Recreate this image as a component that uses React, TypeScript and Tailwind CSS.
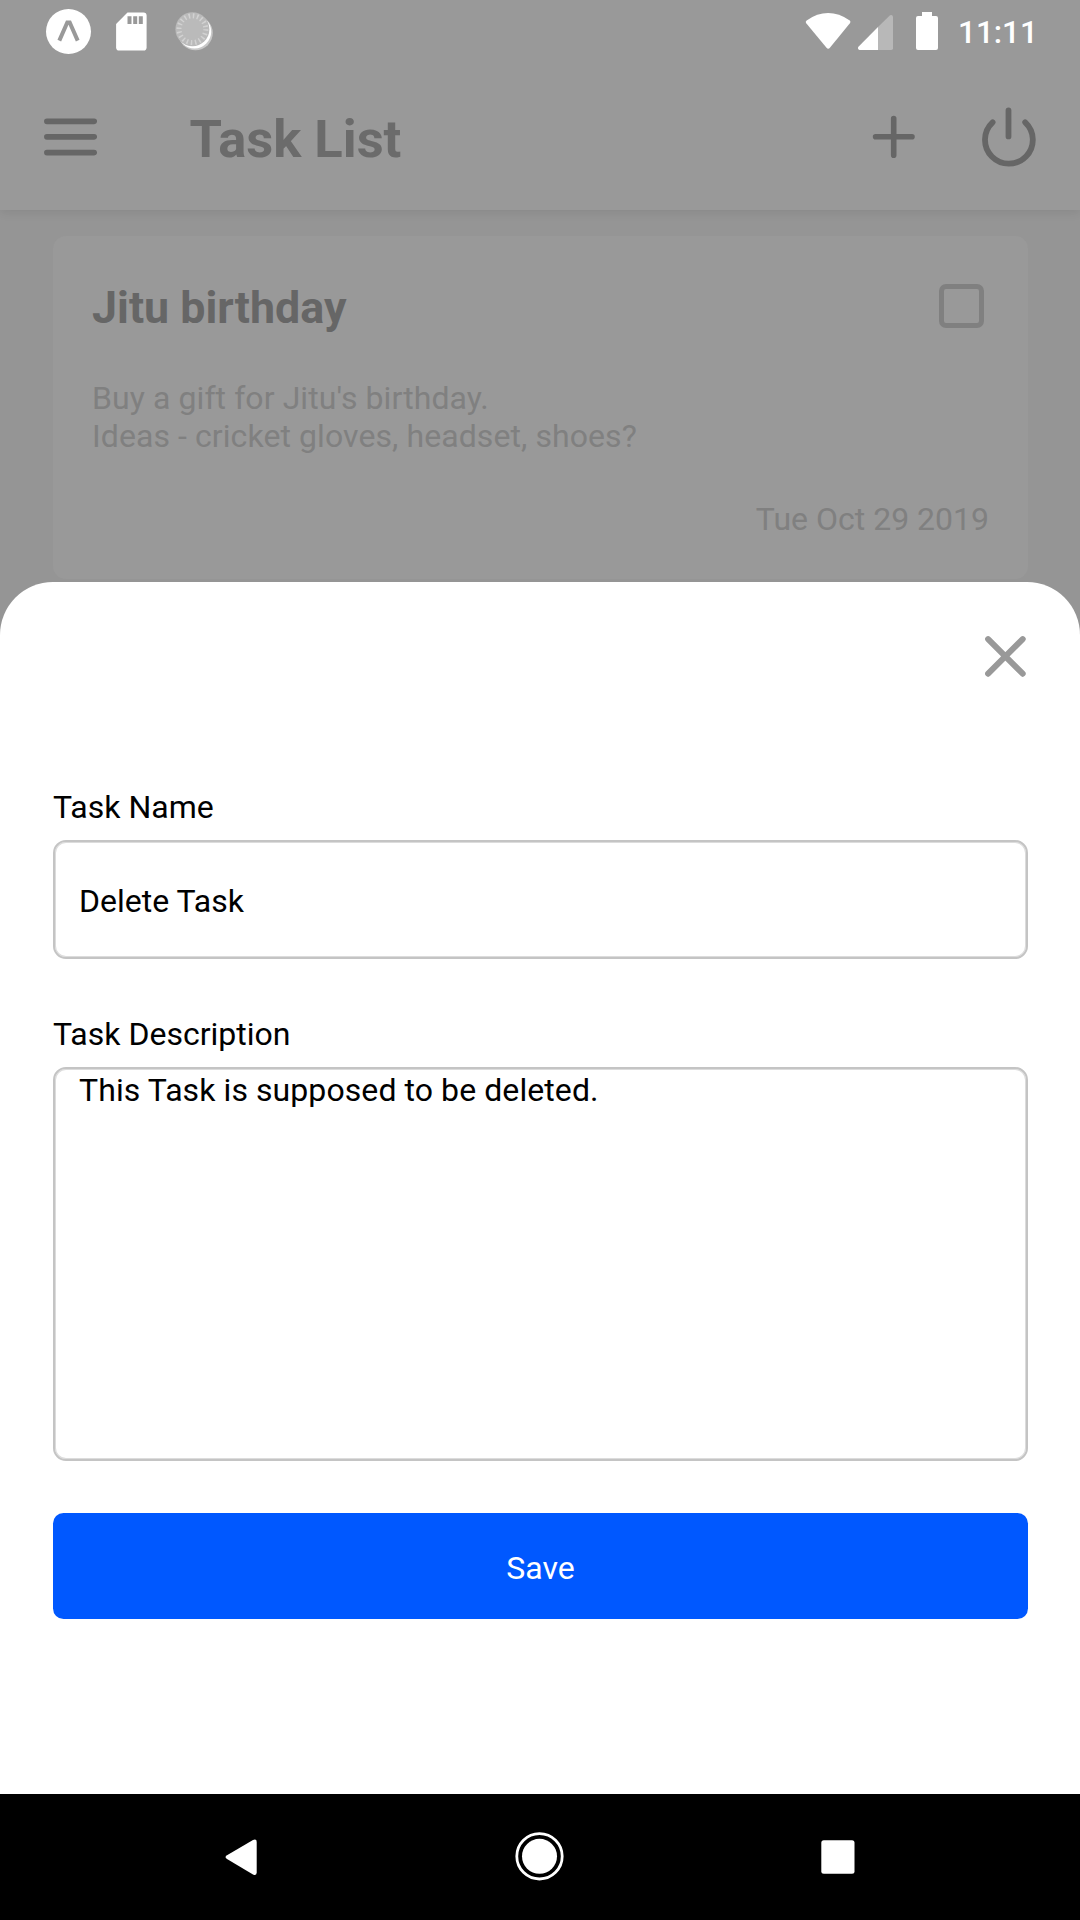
import React from "react";

function StatusBar() {
  return (
    <div className="flex h-[63px] w-full items-start">
      <svg className="block h-[63px] w-[240px]" viewBox="0 0 240 63">
        <circle cx="68.5" cy="31.5" r="22.5" fill="#fff" />
        <path d="M59.3 40.6 67.3 22.4H69.7L77.7 40.6" fill="none" stroke="#999" strokeWidth="4" />
        <path d="M127.5 12.5H143.5Q146.6 12.5 146.6 15.6V47.4Q146.6 50.5 143.5 50.5H119.2Q116.1 50.5 116.1 47.4V23.9Z" fill="#fff" />
        <path d="M127.5 16.3h4v7.7h-4zM133.2 16.3h4v7.7h-4zM138.8 16.3h4v7.7h-4z" fill="#999" />
        <circle cx="195.5" cy="33" r="17.3" fill="#c8c8c8" />
        <circle cx="194.5" cy="31.7" r="16.7" fill="#fff" />
        <circle cx="192.4" cy="29.2" r="17" fill="#bababa" />
        <circle cx="192.4" cy="29.2" r="13.4" fill="none" stroke="#d2d2d2" strokeWidth="5" strokeDasharray="1.5 2.71" />
      </svg>
      <div className="flex-1" />
      <svg className="block h-[63px] w-[160px]" viewBox="800 0 160 63">
        <path d="M806.6 20.4Q828 5.6 849.8 20.4Q851 21.6 850.1 22.9L829.9 47.8Q828.2 49.8 826.5 47.8L806 22.9Q805.2 21.6 806.6 20.4Z" fill="#fff" />
        <path d="M878 27V50H891.2Q893 50 893 48.2V16.8Q892.6 14.2 890 15.2Z" fill="#b8b8b8" />
        <path d="M878 27V50H859.5Q857.4 49.4 858.2 47Z" fill="#fff" />
        <path d="M922 12h10v4h4q2 0 2 2v30q0 2-2 2h-18q-2 0-2-2V18q0-2 2-2h4z" fill="#fff" />
      </svg>
      <span className="-ml-[2px] mt-[14px] w-[122px] text-[31.5px] leading-[38px] font-medium text-white">11:11</span>
    </div>
  );
}

function Header() {
  return (
    <header className="flex h-[147px] items-start px-[44px]">
      <svg className="mt-[55px] block h-[38px] w-[53px]" viewBox="0 0 53 38" stroke="#666" strokeWidth="5.7" strokeLinecap="round">
        <path d="M2.9 3.3H50.2M2.9 18.8H50.2M2.9 34.6H50.2" />
      </svg>
      <h1 className="mt-[46px] ml-[92.5px] flex-1 text-[52.5px] leading-[60px] font-bold text-[#6b6b6b]">Task List</h1>
      <svg className="mt-[44px] block h-[60px] w-[164px]" viewBox="872 107 164 60" fill="none" stroke="#666" strokeWidth="5.6" strokeLinecap="round">
        <path d="M875.6 136.8H912M893.7 118.5V155.2" />
        <path strokeWidth="5.8" d="M992.6 122.3A23.9 23.9 0 1 0 1025.2 122.3M1008.5 110.4V136.4" />
      </svg>
    </header>
  );
}

function TaskCard() {
  return (
    <article className="flex h-[343px] flex-col rounded-[13px] bg-[#999] px-[39px] pt-[44px]">
      <div className="flex justify-between">
        <h2 className="text-[44.8px] leading-[56px] font-bold text-[#666]">Jitu birthday</h2>
        <span className="mt-[3.5px] mr-[5px] h-[44.5px] w-[45px] rounded-[7px] border-[5px] border-[#808080]" />
      </div>
      <p className="mt-[43px] text-[32px] leading-[38px] tracking-[0.08px] text-[#808080]">
        Buy a gift for Jitu's birthday.
        <br />
        Ideas - cricket gloves, headset, shoes?
      </p>
      <p className="mt-[45px] text-right text-[32px] leading-[38px] text-[#808080]">Tue Oct 29 2019</p>
    </article>
  );
}

function TaskSheet() {
  return (
    <section className="flex h-[1212px] flex-col rounded-t-[53px] bg-white pr-[52px] pl-[53px]">
      <button className="mt-[53px] mr-[1px] self-end" aria-label="Close">
        <svg className="block h-[43px] w-[43px]" viewBox="0 0 43 43" stroke="#999" strokeWidth="6" strokeLinecap="round">
          <path d="M4.1 4.1 38.7 38.7M38.7 4.1 4.1 38.7" />
        </svg>
      </button>
      <label className="mt-[110px] text-[32px] leading-[38px] text-black">Task Name</label>
      <input
        className="mt-[14px] h-[119px] w-full rounded-[13px] border-2 border-[#c4c4c4] px-[24px] pt-[3px] text-[32px] text-black shadow-[inset_0_0_0_1px_#dcdcdc]"
        defaultValue="Delete Task"
      />
      <label className="mt-[56px] text-[32px] leading-[38px] text-black">Task Description</label>
      <textarea
        className="mt-[14px] block h-[394px] w-full resize-none rounded-[13px] border-2 border-[#c4c4c4] px-[24px] pt-[2px] text-[32px] leading-[38px] tracking-[0.08px] text-black shadow-[inset_0_0_0_1px_#dcdcdc]"
        defaultValue="This Task is supposed to be deleted."
      />
      <button className="mt-[52px] h-[106px] w-full rounded-[10.5px] bg-[#0058ff] pt-[4px] text-[32px] leading-[38px] text-white">Save</button>
    </section>
  );
}

function NavigationBar() {
  return (
    <nav className="h-[126px] bg-black">
      <svg className="block h-[126px] w-[1080px]" viewBox="0 1794 1080 126" fill="#fff">
        <path d="M227 1855.2 253 1840Q256.7 1838.5 256.7 1842V1872.6Q256.7 1876 253 1874.4L227 1859Q224 1857.1 227 1855.2Z" />
        <circle cx="539.5" cy="1856.3" r="17.5" />
        <circle cx="539.5" cy="1856.3" r="22.7" fill="none" stroke="#fff" strokeWidth="2.8" />
        <rect x="821.3" y="1840.3" width="33.2" height="33.4" rx="2.5" />
      </svg>
    </nav>
  );
}

export default function App() {
  return (
    <div className="h-[1920px] w-[1080px] overflow-hidden bg-[#959595] font-['Roboto',sans-serif]">
      <div className="bg-[#999] shadow-[0_3px_9px_rgba(0,0,0,0.08)]">
        <StatusBar />
        <Header />
      </div>
      <main className="h-[372px] pt-[26px] pr-[52px] pl-[53px]">
        <TaskCard />
      </main>
      <TaskSheet />
      <NavigationBar />
    </div>
  );
}
